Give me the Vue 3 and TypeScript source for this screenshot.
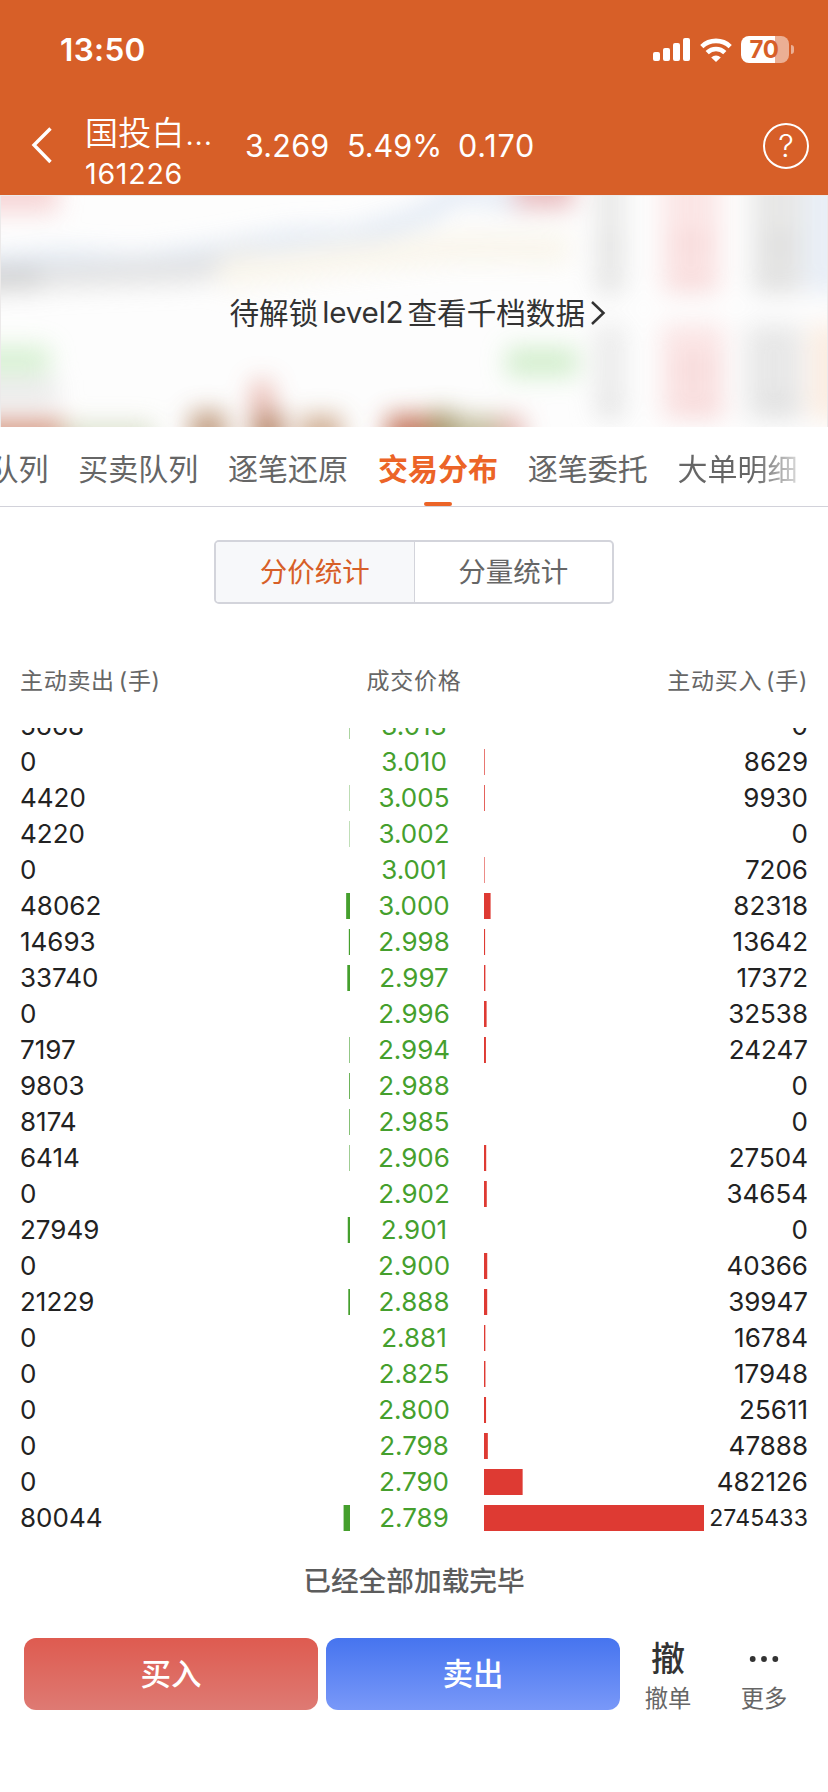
<script setup lang="ts">
interface PriceRow {
  sell: number
  price: string
  buy: number
}

const raw: [number, string, number][] = [
  [5668, '3.013', 0],
  [0, '3.010', 8629],
  [4420, '3.005', 9930],
  [4220, '3.002', 0],
  [0, '3.001', 7206],
  [48062, '3.000', 82318],
  [14693, '2.998', 13642],
  [33740, '2.997', 17372],
  [0, '2.996', 32538],
  [7197, '2.994', 24247],
  [9803, '2.988', 0],
  [8174, '2.985', 0],
  [6414, '2.906', 27504],
  [0, '2.902', 34654],
  [27949, '2.901', 0],
  [0, '2.900', 40366],
  [21229, '2.888', 39947],
  [0, '2.881', 16784],
  [0, '2.825', 17948],
  [0, '2.800', 25611],
  [0, '2.798', 47888],
  [0, '2.790', 482126],
  [80044, '2.789', 2745433],
]
const rows: PriceRow[] = raw.map(([sell, price, buy]) => ({ sell, price, buy }))

const TRACK = 220
const peak = Math.max(...rows.map((r) => Math.max(r.sell, r.buy)))
const barWidth = (v: number): number => (v / peak) * TRACK

const tabs = ['千档队列', '买卖队列', '逐笔还原', '交易分布', '逐笔委托', '大单明细']
const activeTab = '交易分布'
</script>

<template>
  <div class="page">
    <header class="top">
      <div class="status">
        <span class="clock">13:50</span>
        <div class="status-icons">
          <svg class="signal" width="37" height="23" viewBox="0 0 37 23" fill="#fff">
            <rect x="0" y="14" width="7" height="9" rx="2" />
            <rect x="10" y="10" width="7" height="13" rx="2" />
            <rect x="20" y="5" width="7" height="18" rx="2" />
            <rect x="30" y="0" width="7" height="23" rx="2" />
          </svg>
          <svg class="wifi" width="32" height="24" viewBox="0 0 32 24">
            <g fill="none" stroke="#fff" stroke-width="4.6">
              <path d="M1.8 8.6 A20.5 20.5 0 0 1 30.2 8.6" />
              <path d="M7.2 14.6 A12.6 12.6 0 0 1 24.8 14.6" />
            </g>
            <path d="M16 24 L11.2 19.4 A7 7 0 0 1 20.8 19.4 Z" fill="#fff" />
          </svg>
          <div class="battery"><span>70</span></div>
          <i class="nub"></i>
        </div>
      </div>
      <div class="nav">
        <svg class="back" width="24" height="40" viewBox="0 0 24 40">
          <path d="M20.5 3.5 L4 20 L20.5 37" fill="none" stroke="#fff" stroke-width="3.4" />
        </svg>
        <div class="fund">
          <div class="name">国投白<span class="dots">...</span></div>
          <div class="code">161226</div>
        </div>
        <div class="quote">
          <span class="q1">3.269</span>
          <span class="q2">5.49%</span>
          <span class="q3">0.170</span>
        </div>
        <div class="help">?</div>
      </div>
    </header>

    <section class="locked">
      <svg class="preview" width="826" height="231" viewBox="1 1 826 231">
        <defs>
          <filter id="soft" x="-100" y="-100" width="1040" height="440" filterUnits="userSpaceOnUse">
            <feGaussianBlur stdDeviation="12" />
          </filter>
        </defs>
        <rect width="828" height="232" fill="#fdfdfd" />
        <g filter="url(#soft)" opacity="0.86">
          <rect x="-40" y="-30" width="98" height="48" fill="#f6d0d1" />
          <path d="M-40 72 L60 64 L140 68 L210 58 L290 44 L350 42 L420 22 L460 -4 L530 8" fill="none" stroke="#dde6f3" stroke-width="20" />
          <path d="M-40 84 L45 82" fill="none" stroke="#cccccc" stroke-width="26" />
          <path d="M40 82 L190 76 L260 62" fill="none" stroke="#dedede" stroke-width="24" />
          <path d="M220 78 L340 64 L460 52 L570 54" fill="none" stroke="#f9f5ea" stroke-width="32" />
          <rect x="514" y="-30" width="60" height="44" fill="#e6b4b7" />
          <rect x="-40" y="151" width="90" height="28" fill="#d0efcb" />
          <rect x="-40" y="184" width="98" height="24" fill="#e6e6e6" />
          <rect x="506" y="152" width="72" height="30" fill="#ccecc6" />
          <rect x="-40" y="222" width="104" height="50" fill="#d4957f" />
          <rect x="64" y="228" width="90" height="40" fill="#d6dcc4" />
          <rect x="190" y="216" width="36" height="60" fill="#b99070" />
          <rect x="252" y="186" width="20" height="80" fill="#e6aca2" />
          <rect x="252" y="216" width="32" height="60" fill="#b07a58" />
          <rect x="300" y="220" width="42" height="60" fill="#c9a283" />
          <rect x="386" y="219" width="60" height="60" fill="#c06a50" />
          <rect x="430" y="216" width="26" height="60" fill="#9a8c58" />
          <rect x="456" y="221" width="44" height="60" fill="#bcb490" />
          <rect x="500" y="221" width="24" height="60" fill="#e0aba4" />
          <rect x="595" y="-30" width="30" height="128" fill="#e6e6e5" />
          <rect x="595" y="130" width="30" height="94" fill="#e8e8e8" />
          <rect x="662" y="-30" width="58" height="128" fill="#fbe2e2" />
          <rect x="662" y="130" width="62" height="94" fill="#fae0e0" />
          <rect x="752" y="-30" width="52" height="128" fill="#e3e3e2" />
          <rect x="746" y="130" width="56" height="94" fill="#e4e4e4" />
          <g fill="#d8d8d8">
            <rect x="602" y="44" width="16" height="14" />
            <rect x="602" y="80" width="16" height="14" />
            <rect x="762" y="42" width="36" height="16" />
            <rect x="758" y="78" width="36" height="16" />
            <rect x="602" y="206" width="16" height="12" />
            <rect x="762" y="204" width="36" height="14" />
          </g>
          <g fill="#f5cfcf">
            <rect x="672" y="42" width="40" height="14" />
            <rect x="672" y="78" width="40" height="14" />
            <rect x="676" y="168" width="40" height="14" />
            <rect x="676" y="204" width="44" height="14" />
          </g>
          <rect x="806" y="-30" width="60" height="128" fill="#e5ecf6" />
          <rect x="810" y="130" width="60" height="94" fill="#fbeadd" />
        </g>
      </svg>
      <div class="unlock">
        <span>待解锁</span><span class="latin">level2</span><span>查看千档数据</span>
        <svg width="16" height="26" viewBox="0 0 16 26">
          <path d="M2 2 L13.5 13 L2 24" fill="none" stroke="#333" stroke-width="2.5" />
        </svg>
      </div>
    </section>

    <nav class="tabs">
      <span v-for="t in tabs" :key="t" class="tab" :class="{ active: t === activeTab }">{{ t }}</span>
    </nav>

    <div class="segment">
      <div class="seg on">分价统计</div>
      <div class="seg">分量统计</div>
    </div>

    <div class="columns">
      <span>主动卖出<i>(</i>手)</span>
      <span class="mid">成交价格</span>
      <span class="end">主动买入<i>(</i>手)</span>
    </div>

    <div class="list">
      <div class="rows">
        <div v-for="r in rows" :key="r.price" class="row">
          <span class="sell">{{ r.sell }}</span>
          <svg class="bar" width="220" height="26">
            <rect :x="TRACK - barWidth(r.sell)" y="0" :width="barWidth(r.sell)" height="26" fill="#459f2d" />
          </svg>
          <span class="price">{{ r.price }}</span>
          <svg class="bar" width="220" height="26">
            <rect x="0" y="0" :width="barWidth(r.buy)" height="26" fill="#de3a33" />
          </svg>
          <span class="buy" :class="{ small: r.buy > 999999 }">{{ r.buy }}</span>
        </div>
      </div>
    </div>

    <div class="loaded">已经全部加载完毕</div>

    <footer class="actions">
      <button class="btn red">买入</button>
      <button class="btn blue">卖出</button>
      <div class="tool">
        <span class="glyph">撤</span>
        <span class="label">撤单</span>
      </div>
      <div class="tool">
        <span class="glyph">
          <svg width="32" height="8" viewBox="0 0 32 8" fill="#333">
            <circle cx="4.7" cy="4" r="2.9" />
            <circle cx="16" cy="4" r="2.9" />
            <circle cx="27.3" cy="4" r="2.9" />
          </svg>
        </span>
        <span class="label">更多</span>
      </div>
    </footer>
  </div>
</template>

<style>
body {
  margin: 0;
  background: #fff;
}
</style>

<style scoped>
.page {
  width: 828px;
  height: 1792px;
  overflow: hidden;
  background: #fff;
  font-family: Inter, 'Noto Sans CJK SC', sans-serif;
  color: #222;
  white-space: nowrap;
}
i {
  font-style: normal;
}
svg {
  display: block;
  flex: none;
}

/* header */
.top {
  height: 195px;
  background: #d75f28;
  color: #fff;
}
.status {
  height: 99px;
  display: flex;
  align-items: center;
  justify-content: space-between;
  padding: 0 34px 0 60px;
  box-sizing: border-box;
}
.clock {
  font-size: 31.5px;
  font-weight: 600;
  letter-spacing: 0.35px;
}
.status-icons {
  display: flex;
  align-items: center;
}
.wifi {
  margin: 0 9px 0 10px;
}
.battery {
  width: 48px;
  height: 27px;
  border-radius: 8px;
  background: linear-gradient(90deg, #fff 34px, rgba(255, 255, 255, 0.5) 34px);
  color: #d75f28;
  font-size: 24px;
  font-weight: 700;
  line-height: 27px;
  text-align: center;
  letter-spacing: -0.4px;
  text-indent: -2px;
}
.nub {
  width: 3px;
  height: 9px;
  margin-left: 2px;
  border-radius: 0 4px 4px 0;
  background: rgba(255, 255, 255, 0.5);
}
.nav {
  height: 96px;
  display: flex;
  padding-left: 30px;
  padding-right: 19px;
}
.back {
  margin-top: 26px;
}
.fund {
  width: 158px;
  margin-left: 31px;
}
.name {
  height: 38px;
  margin-top: 15px;
  line-height: 38px;
  font-size: 33px;
  font-weight: 350;
  letter-spacing: 0.3px;
}
.dots {
  letter-spacing: -0.2px;
}
.code {
  height: 34px;
  margin-top: 1px;
  line-height: 42px;
  font-size: 28.6px;
  letter-spacing: 0.75px;
}
.quote {
  display: flex;
  height: 93px;
  align-items: center;
  font-size: 30.5px;
  flex: 1;
}
.q1 {
  width: 102px;
  margin-left: 2px;
  letter-spacing: 0.2px;
}
.q2 {
  width: 111px;
}
.q3 {
  letter-spacing: 0.8px;
}
.help {
  width: 46px;
  height: 46px;
  margin-top: 24px;
  box-sizing: border-box;
  border: 2px solid #fff;
  border-radius: 50%;
  text-align: center;
  line-height: 42px;
  font-size: 31px;
  font-weight: 350;
}

/* locked banner */
.locked {
  height: 231px;
  padding: 1px 1px 0;
  background: #eceaea;
  display: grid;
}
.locked > * {
  grid-area: 1 / 1;
}
.unlock {
  z-index: 1;
  display: flex;
  align-items: center;
  height: 231px;
  padding-left: 228.5px;
  font-size: 29.6px;
  color: #333;
}
.latin {
  margin: 0 4px 0 4px;
  letter-spacing: -0.2px;
}
.unlock svg {
  margin: 2px 0 0 5px;
}

/* tabs */
.tabs {
  height: 79px;
  display: flex;
  gap: 29.8px;
  border-bottom: 1px solid #d2d2da;
  font-size: 30px;
  color: #666;
}
.tab {
  flex: none;
  height: 79px;
  line-height: 84px;
  display: flex;
  flex-direction: column;
  align-items: center;
}
.tab:first-child {
  margin-left: -71.5px;
}
.tab.active {
  color: #ec6427;
  font-weight: 600;
}
.tab.active::after {
  content: '';
  width: 28px;
  height: 4px;
  margin-top: -9px;
  border-radius: 2px;
  background: #ec6427;
}
.tab:last-child {
  background: linear-gradient(90deg, #666 76px, #dcdcdc 122px);
  background-clip: text;
  -webkit-background-clip: text;
  color: transparent;
}

/* segmented control */
.segment {
  width: 400px;
  height: 64px;
  box-sizing: border-box;
  margin: 33px auto 0;
  display: flex;
  border: 2px solid #d3d4db;
  border-radius: 5px;
  overflow: hidden;
  font-size: 27.5px;
  color: #666;
}
.seg {
  flex: 1;
  text-align: center;
  line-height: 60px;
}
.seg.on {
  background: #f7f8fa;
  color: #d75f28;
  border-right: 1px solid #d3d4db;
}

/* table */
.columns {
  height: 46px;
  margin: 54px 20px 0;
  display: grid;
  grid-template-columns: 1fr 120px 1fr;
  line-height: 46px;
  font-size: 23px;
  letter-spacing: 0.7px;
  color: #666;
}
.columns i {
  margin-left: 4px;
}
.mid {
  text-align: center;
}
.end {
  text-align: right;
}
.list {
  height: 804px;
  margin-top: 24px;
  overflow: hidden;
}
.rows {
  margin-top: -20px;
}
.row {
  height: 36px;
  display: grid;
  grid-template-columns: 130px 220px 134px 220px 124px;
  align-items: center;
  line-height: 36px;
  font-size: 26px;
}
.sell {
  padding-left: 20px;
}
.price {
  text-align: center;
  padding-right: 6px;
  color: #459f2d;
}
.buy {
  text-align: right;
  padding-right: 20px;
}
.buy.small {
  font-size: 23px;
  letter-spacing: 0.15px;
}
.loaded {
  height: 40px;
  margin-top: 29px;
  text-align: center;
  line-height: 40px;
  font-size: 27.7px;
  font-weight: 500;
  color: #5c5c5c;
}

/* bottom actions */
.actions {
  margin-top: 37px;
  padding-left: 24px;
  display: flex;
  gap: 8px;
}
.btn {
  width: 294px;
  height: 72px;
  padding: 0;
  border: 0;
  border-radius: 12px;
  color: #fff;
  font-family: inherit;
  font-size: 30.5px;
  font-weight: 500;
  line-height: 72px;
}
.red {
  background: linear-gradient(#de5b50, #de7a73);
}
.blue {
  background: linear-gradient(#4674ef, #7998f8);
}
.tool {
  width: 88px;
  margin-left: -4px;
  display: flex;
  flex-direction: column;
  align-items: center;
  color: #333;
}
.tool + .tool {
  margin-left: 0;
}
.glyph {
  height: 42px;
  display: flex;
  align-items: center;
  font-size: 34px;
  font-weight: 500;
  line-height: 40px;
}
.label {
  height: 38px;
  line-height: 38px;
  font-size: 23.3px;
  color: #666;
}
</style>
